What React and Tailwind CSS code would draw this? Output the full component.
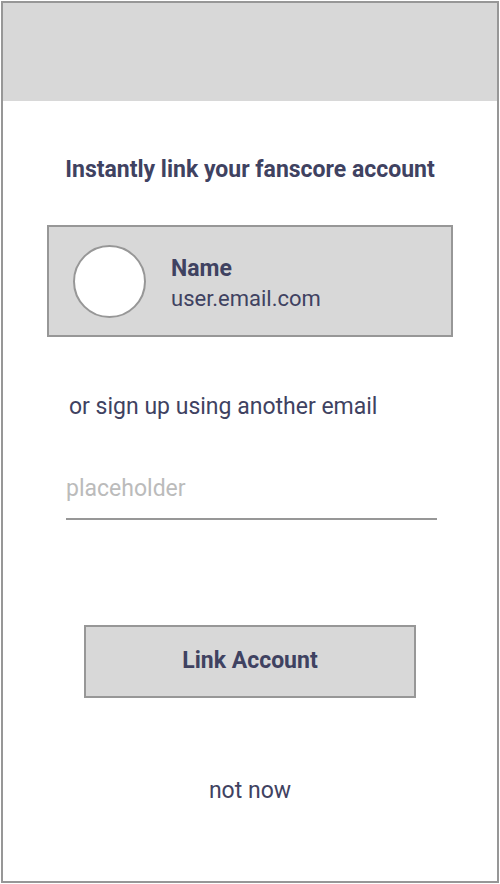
export default function App() {
  return (
    <div className="min-h-screen bg-white p-px font-['Roboto',sans-serif] text-[#3f4261]">
      <main className="flex min-h-[calc(100vh-2px)] flex-col border-2 border-[#979797] bg-white">
        <header className="h-[98px] bg-[#d8d8d8]" />
        <h1 className="mt-[53px] text-center text-[23px] leading-8 font-bold">
          Instantly link your fanscore account
        </h1>
        <button
          type="button"
          className="mx-11 mt-[39px] flex h-28 items-center gap-[25px] border-2 border-[#979797] bg-[#d8d8d8] px-6 text-left"
        >
          <span className="size-[73px] shrink-0 rounded-full border-2 border-[#979797] bg-white" />
          <span className="flex flex-col pt-1.5 leading-[30px]">
            <span className="text-[23px] font-bold">Name</span>
            <span className="text-[22px]">user.email.com</span>
          </span>
        </button>
        <form className="flex flex-col" onSubmit={(event) => event.preventDefault()}>
          <label htmlFor="email" className="mx-[66px] mt-[54px] text-[23px] leading-8">
            or sign up using another email
          </label>
          <input
            id="email"
            type="text"
            placeholder="placeholder"
            className="mr-[60px] ml-[63px] mt-9 h-[61px] border-b-2 border-[#979797] bg-transparent text-[23px] outline-none placeholder:text-[#bbbbbb]"
          />
          <button
            type="submit"
            className="mx-[81px] mt-[105px] h-[73px] border-2 border-[#979797] bg-[#d8d8d8] text-[23px] font-bold"
          >
            Link Account
          </button>
        </form>
        <button type="button" className="mt-[77px] self-center text-[23px] leading-8">
          not now
        </button>
      </main>
    </div>
  );
}
